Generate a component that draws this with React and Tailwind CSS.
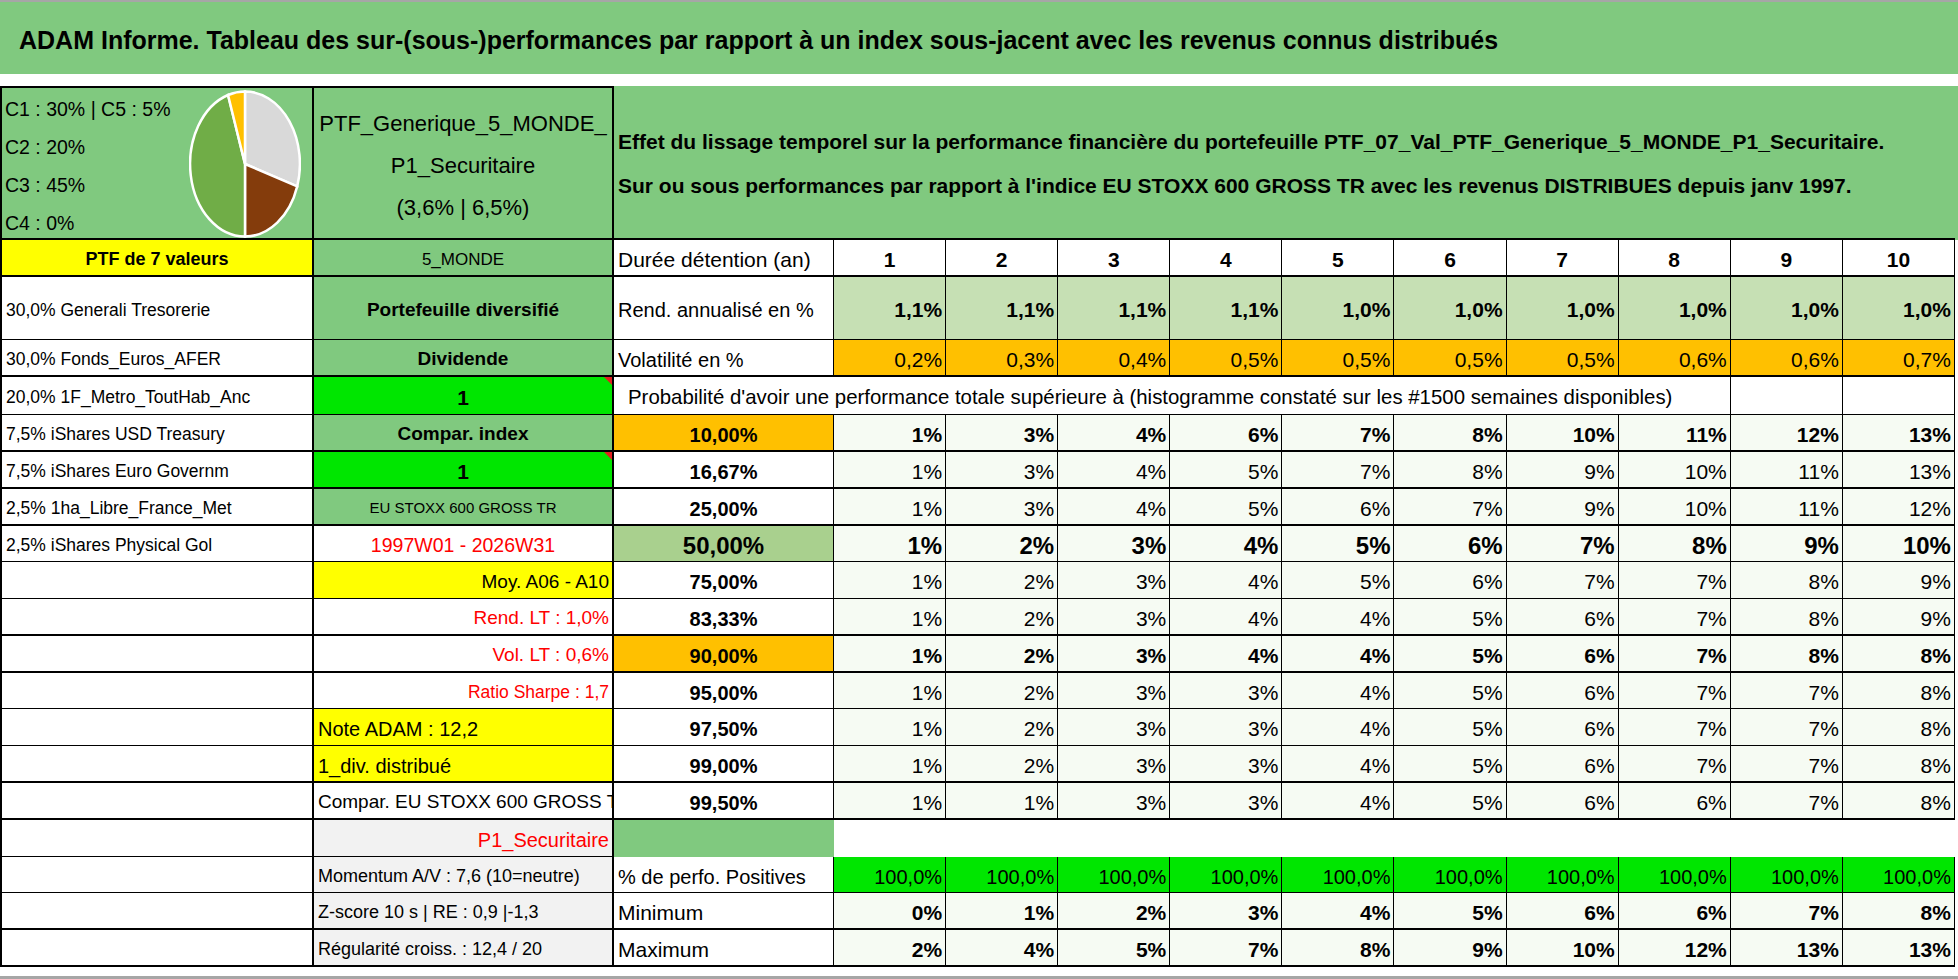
import React from "react";

// bottom border weight for the header block + 19 rows
const THICK = [1, 1, 0, 1, 0, 1, 1, 1, 0, 0, 1, 1, 0, 0, 1, 1, 0, 0, 1, 1];

function bottom(row) {
  return THICK[row] ? "border-b-2" : "border-b";
}

function Cell({ row, className = "", children, noBottom, noRight, rightThick }) {
  var b = noBottom ? "" : bottom(row);
  var r = noRight ? "" : rightThick ? "border-r-2" : "border-r";
  return (
    <div className={"flex items-center overflow-hidden whitespace-nowrap pt-[4px] border-black " + b + " " + r + " " + className}>
      {children}
    </div>
  );
}

function Corner() {
  return <span className="absolute top-0 right-0 h-0 w-0 border-t-[8px] border-l-[8px] border-t-[#e02020] border-l-transparent" />;
}

function Pie() {
  // C1 30% gris, C2 20% brun, C3 45% vert, C4 0%, C5 5% jaune
  return (
    <svg width="112" height="148" viewBox="-1.02 -1.02 2.04 2.04" preserveAspectRatio="none" className="mr-[11px] mt-[2px] shrink-0">
      <path d="M0 0 L0 -1 A1 1 0 0 1 0.9511 0.309 Z" fill="#d9d9d9" stroke="#fff" strokeWidth="2.5" vectorEffect="non-scaling-stroke" />
      <path d="M0 0 L0.9511 0.309 A1 1 0 0 1 0 1 Z" fill="#843c0c" stroke="#fff" strokeWidth="2.5" vectorEffect="non-scaling-stroke" />
      <path d="M0 0 L0 1 A1 1 0 0 1 -0.309 -0.9511 Z" fill="#70ad47" stroke="#fff" strokeWidth="2.5" vectorEffect="non-scaling-stroke" />
      <path d="M0 0 L-0.309 -0.9511 A1 1 0 0 1 0 -1 Z" fill="#ffc000" stroke="#fff" strokeWidth="2.5" vectorEffect="non-scaling-stroke" />
    </svg>
  );
}

const LINES = [
  "30,0% Generali Tresorerie",
  "30,0% Fonds_Euros_AFER",
  "20,0% 1F_Metro_ToutHab_Anc",
  "7,5% iShares USD Treasury",
  "7,5% iShares Euro Governm",
  "2,5% 1ha_Libre_France_Met",
  "2,5% iShares Physical Gol",
];

const PCT = [
  { label: "10,00%", vals: [1, 3, 4, 6, 7, 8, 10, 11, 12, 13], bg: "bg-[#ffc000]", bold: true },
  { label: "16,67%", vals: [1, 3, 4, 5, 7, 8, 9, 10, 11, 13], bg: "bg-white" },
  { label: "25,00%", vals: [1, 3, 4, 5, 6, 7, 9, 10, 11, 12], bg: "bg-white" },
  { label: "50,00%", vals: [1, 2, 3, 4, 5, 6, 7, 8, 9, 10], bg: "bg-[#a9d08e]", bold: true, big: true },
  { label: "75,00%", vals: [1, 2, 3, 4, 5, 6, 7, 7, 8, 9], bg: "bg-white" },
  { label: "83,33%", vals: [1, 2, 3, 4, 4, 5, 6, 7, 8, 9], bg: "bg-white" },
  { label: "90,00%", vals: [1, 2, 3, 4, 4, 5, 6, 7, 8, 8], bg: "bg-[#ffc000]", bold: true },
  { label: "95,00%", vals: [1, 2, 3, 3, 4, 5, 6, 7, 7, 8], bg: "bg-white" },
  { label: "97,50%", vals: [1, 2, 3, 3, 4, 5, 6, 7, 7, 8], bg: "bg-white" },
  { label: "99,00%", vals: [1, 2, 3, 3, 4, 5, 6, 7, 7, 8], bg: "bg-white" },
  { label: "99,50%", vals: [1, 1, 3, 3, 4, 5, 6, 6, 7, 8], bg: "bg-white" },
];

const REND = ["1,1%", "1,1%", "1,1%", "1,1%", "1,0%", "1,0%", "1,0%", "1,0%", "1,0%", "1,0%"];
const VOL = ["0,2%", "0,3%", "0,4%", "0,5%", "0,5%", "0,5%", "0,5%", "0,6%", "0,6%", "0,7%"];
const MINI = [0, 1, 2, 3, 4, 5, 6, 6, 7, 8];
const MAXI = [2, 4, 5, 7, 8, 9, 10, 12, 13, 13];

// colonne B, lignes 2 à 19
const COLB = [
  { t: "Portefeuille diversifié", c: "bg-[#80c97f] justify-center font-bold text-[19px]" },
  { t: "Dividende", c: "bg-[#80c97f] justify-center font-bold text-[19px]" },
  { t: "1", c: "bg-[#00e600] justify-center font-bold text-[21px] relative", corner: true },
  { t: "Compar. index", c: "bg-[#80c97f] justify-center font-bold text-[19px]" },
  { t: "1", c: "bg-[#00e600] justify-center font-bold text-[21px] relative", corner: true },
  { t: "EU STOXX 600 GROSS TR", c: "bg-[#80c97f] justify-center text-[15px]" },
  { t: "1997W01 - 2026W31", c: "bg-white justify-center text-[19.5px] text-[#ff0000]" },
  { t: "Moy. A06 - A10", c: "bg-[#ffff00] justify-end pr-[3px] text-[19px]" },
  { t: "Rend. LT : 1,0%", c: "bg-white justify-end pr-[3px] text-[19px] text-[#ff0000]" },
  { t: "Vol. LT : 0,6%", c: "bg-white justify-end pr-[3px] text-[19px] text-[#ff0000]" },
  { t: "Ratio Sharpe : 1,7", c: "bg-white justify-end pr-[3px] text-[17.5px] text-[#ff0000]" },
  { t: "Note ADAM : 12,2", c: "bg-[#ffff00] pl-[4px] text-[20px]" },
  { t: "1_div. distribué", c: "bg-[#ffff00] pl-[4px] text-[20px]" },
  { t: "Compar. EU STOXX 600 GROSS TR", c: "bg-white pl-[4px] text-[19px]" },
  { t: "P1_Securitaire", c: "bg-[#f2f2f2] justify-end pr-[3px] text-[20px] text-[#ff0000]" },
  { t: "Momentum A/V : 7,6 (10=neutre)", c: "bg-[#f2f2f2] pl-[4px] text-[18px]" },
  { t: "Z-score 10 s | RE : 0,9 |-1,3", c: "bg-[#f2f2f2] pl-[4px] text-[18px]" },
  { t: "Régularité croiss. : 12,4 / 20", c: "bg-[#f2f2f2] pl-[4px] text-[18px]" },
];

function RowRest({ row }) {
  if (row === 1) {
    return (
      <>
        <Cell row={row} className="bg-white pl-[4px] text-[21px]">Durée détention (an)</Cell>
        {[1, 2, 3, 4, 5, 6, 7, 8, 9, 10].map(function (n) {
          return (
            <Cell key={n} row={row} className="bg-white justify-center font-bold text-[21px]">{n}</Cell>
          );
        })}
      </>
    );
  }
  if (row === 2 || row === 3) {
    var vals = row === 2 ? REND : VOL;
    return (
      <>
        <Cell row={row} className="bg-white pl-[4px] text-[20px]">
          {row === 2 ? "Rend. annualisé en %" : "Volatilité en %"}
        </Cell>
        {vals.map(function (v, i) {
          return (
            <Cell
              key={i}
              row={row}
              className={row === 2 ? "bg-[#c6e0b4] justify-end pr-[3px] font-bold text-[21px]" : "bg-[#ffc000] justify-end pr-[3px] text-[21px]"}
            >
              {v}
            </Cell>
          );
        })}
      </>
    );
  }
  if (row === 4) {
    return (
      <>
        <Cell row={row} className="col-span-9 bg-white pl-[14px] text-[20.4px]">
          Probabilité d'avoir une performance totale supérieure à (histogramme constaté sur les #1500 semaines disponibles)
        </Cell>
        <Cell row={row} className="bg-white" />
        <Cell row={row} className="bg-white" />
      </>
    );
  }
  if (row >= 5 && row <= 15) {
    var p = PCT[row - 5];
    var size = p.big ? "text-[24px]" : "text-[21px]";
    return (
      <>
        <Cell row={row} className={p.bg + " justify-center font-bold " + (p.big ? "text-[24px]" : "text-[20px]")}>{p.label}</Cell>
        {p.vals.map(function (v, i) {
          return (
            <Cell key={i} row={row} className={"bg-[#f6fbf3] justify-end pr-[3px] " + size + (p.bold ? " font-bold" : "")}>
              {v + "%"}
            </Cell>
          );
        })}
      </>
    );
  }
  if (row === 16) {
    return (
      <>
        <Cell row={row} noBottom noRight className="bg-[#80c97f]" />
        <div className="col-span-10 bg-white" />
      </>
    );
  }
  if (row === 17) {
    return (
      <>
        <Cell row={row} className="bg-white pl-[4px] text-[20px]">% de perfo. Positives</Cell>
        {MINI.map(function (_, i) {
          return (
            <Cell key={i} row={row} className="bg-[#00e600] justify-end pr-[3px] text-[20px]">100,0%</Cell>
          );
        })}
      </>
    );
  }
  var list = row === 18 ? MINI : MAXI;
  return (
    <>
      <Cell row={row} className="bg-white pl-[4px] text-[21px]">{row === 18 ? "Minimum" : "Maximum"}</Cell>
      {list.map(function (v, i) {
        return (
          <Cell key={i} row={row} className="bg-[#f6fbf3] justify-end pr-[3px] font-bold text-[21px]">{v + "%"}</Cell>
        );
      })}
    </>
  );
}

export default function App() {
  var rows = [];
  for (var r = 1; r <= 19; r++) {
    var a;
    if (r === 1) {
      a = (
        <Cell row={r} rightThick className="border-l-2 bg-[#ffff00] justify-center font-bold text-[18px]">PTF de 7 valeurs</Cell>
      );
    } else {
      a = (
        <Cell row={r} rightThick className="border-l-2 bg-white pl-[4px] text-[17.5px]">{LINES[r - 2] || ""}</Cell>
      );
    }
    var b;
    if (r === 1) {
      b = <Cell row={r} rightThick className="bg-[#80c97f] justify-center text-[17px]">5_MONDE</Cell>;
    } else {
      var cb = COLB[r - 2];
      b = (
        <Cell row={r} rightThick className={cb.c}>
          {cb.t}
          {cb.corner ? <Corner /> : null}
        </Cell>
      );
    }
    rows.push(
      <React.Fragment key={r}>
        {a}
        {b}
        <RowRest row={r} />
      </React.Fragment>
    );
  }

  return (
    <div className="w-[1958px] h-[979px] overflow-hidden bg-white text-black font-['Liberation_Sans',Arial,sans-serif]">
      <div className="flex h-[74px] items-center whitespace-nowrap border-t-2 border-[#a6a6a6] bg-[#80c97f] pl-[19px] pt-[6px] text-[25px] font-bold">
        ADAM Informe. Tableau des sur-(sous-)performances par rapport à un index sous-jacent avec les revenus connus distribués
      </div>
      <div className="h-[12px] bg-white" />
      <div className="flex w-[1958px]">
        <div className="grid w-[1955px] grid-cols-[314px_300px_220px_repeat(10,112.1px)] grid-rows-[154px_37px_63px_37px_38px_37px_37px_37px_36px_37px_37px_37px_36px_37px_37px_37px_37px_36px_37px_37px]">
          <div className="flex items-start justify-between border-2 border-black bg-[#80c97f]">
            <div className="pl-[3px] pt-[2px] text-[19.5px] leading-[38px]">
              <div>C1 : 30% | C5 : 5%</div>
              <div>C2 : 20%</div>
              <div>C3 : 45%</div>
              <div>C4 : 0%</div>
            </div>
            <Pie />
          </div>
          <div className="flex flex-col items-center justify-center whitespace-nowrap border-t-2 border-r-2 border-b-2 border-black bg-[#80c97f] pt-[6px] text-[22px] leading-[42px]">
            <div>PTF_Generique_5_MONDE_</div>
            <div>P1_Securitaire</div>
            <div>(3,6% | 6,5%)</div>
          </div>
          <div className="col-span-11 flex flex-col justify-center whitespace-nowrap border-b-2 border-black bg-[#80c97f] pl-[4px] pt-[4px] text-[21px] font-bold leading-[44px]">
            <div>Effet du lissage temporel sur la performance financière du portefeuille PTF_07_Val_PTF_Generique_5_MONDE_P1_Securitaire.</div>
            <div>Sur ou sous performances par rapport à l'indice EU STOXX 600 GROSS TR avec les revenus DISTRIBUES depuis janv 1997.</div>
          </div>
          {rows}
        </div>
        <div className="flex w-[3px] flex-col">
          <div className="h-[154px] bg-[#80c97f]" />
        </div>
      </div>
      <div className="h-[9px] bg-white" />
      <div className="h-[3px] bg-[#a6a6a6]" />
    </div>
  );
}
